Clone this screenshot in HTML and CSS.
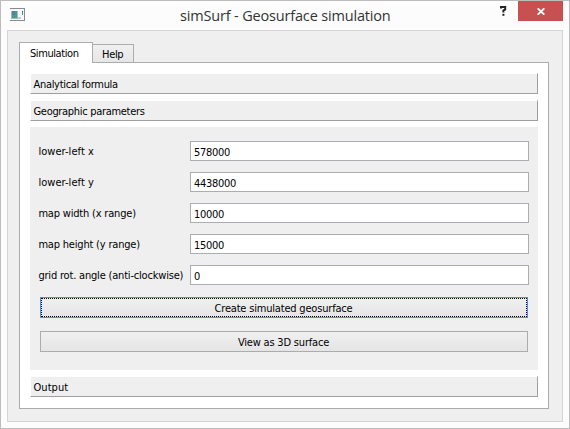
FILE: index.html
```html
<!DOCTYPE html>
<html lang="en">
<head>
<meta charset="utf-8">
<title>simSurf - Geosurface simulation</title>
<link rel="stylesheet" href="styles.css">
</head>
<body>
<div class="window">
  <header class="titlebar">
    <svg class="app-icon" width="16" height="14" viewBox="0 0 16 14">
      <rect x="0" y="0" width="15" height="13" fill="#858b8f"/>
      <rect x="0" y="1" width="14" height="11" fill="#f7f8f8"/>
      <rect x="1" y="3" width="7" height="8" fill="#a3b9ca"/>
      <rect x="2" y="3" width="5" height="7" fill="#4d9c80"/>
      <rect x="2" y="3" width="3" height="4" fill="#4f82a3"/>
      <rect x="8" y="9" width="3" height="2" fill="#c8cbcc"/>
      <rect x="12" y="3" width="1" height="2" fill="#3465b5"/>
      <rect x="12" y="5" width="1" height="2" fill="#4aa56c"/>
    </svg>
    <h1 class="title">simSurf - Geosurface simulation</h1>
    <svg class="help" width="8" height="12" viewBox="0 0 8 12">
      <path d="M1 3.6V2H5.2V4.4L3.4 5.6V7.6" fill="none" stroke="#222" stroke-width="2"/>
      <rect x="2.4" y="8.8" width="2" height="2" fill="#222"/>
    </svg>
    <div class="close">
      <svg width="8" height="7" viewBox="0 0 8 7"><path d="M.7 .3L7.3 6.7M7.3 .3L.7 6.7" stroke="#fff" stroke-width="1.8"/></svg>
    </div>
  </header>
  <main class="client">
    <nav class="tabs">
      <div class="tab active"><span class="tightest">Simulation</span></div>
      <div class="tab"><span class="tighter">Help</span></div>
    </nav>
    <section class="pane">
      <div class="section-head"><span class="tighter">Analytical formula</span></div>
      <div class="section-head"><span class="tighter">Geographic parameters</span></div>
      <div class="form">
        <div class="row"><label class="loose">lower-left x</label><div class="field"><span>578000</span></div></div>
        <div class="row"><label class="loose">lower-left y</label><div class="field"><span>4438000</span></div></div>
        <div class="row"><label>map width (x range)</label><div class="field"><span>10000</span></div></div>
        <div class="row"><label>map height (y range)</label><div class="field"><span>15000</span></div></div>
        <div class="row"><label>grid rot. angle (anti-clockwise)</label><div class="field"><span>0</span></div></div>
        <div class="button focused"><span>Create simulated geosurface</span></div>
        <div class="button"><span>View as 3D surface</span></div>
      </div>
      <div class="section-head"><span class="loose">Output</span></div>
    </section>
  </main>
</div>
</body>
</html>
```
FILE: styles.css
```css
* { box-sizing: border-box; }
body {
  margin: 0;
  font: 11px/15px "DejaVu Sans Condensed", "DejaVu Sans", sans-serif;
  font-stretch: condensed;
  color: #000;
}
span, label { white-space: nowrap; letter-spacing: -0.19px; }
.tighter { letter-spacing: -0.31px; }
.tightest { letter-spacing: -0.42px; }
.loose { letter-spacing: 0.05px; }
.window {
  width: 570px;
  height: 429px;
  border: 1px solid #bcbcbc;
  background: #fcfcfc;
  padding: 0 6px 6px;
}
.titlebar { display: flex; height: 29px; align-items: flex-start; }
.app-icon { margin: 7px 0 0 3px; flex: none; }
.title {
  flex: 1;
  margin: 4px 0 0;
  padding-left: 154px;
  font: 14.5px/22px "Open Sans", sans-serif;
  letter-spacing: -0.17px;
  white-space: nowrap;
  color: #333;
}
.help { margin: 4px 10px 0 0; flex: none; }
.close {
  width: 45px;
  height: 20px;
  flex: none;
  background: #c75050;
  display: flex;
  align-items: center;
  justify-content: center;
  padding: 1px 0 0 1px;
}
.client {
  height: 392px;
  border: 1px solid #d4d4d4;
  background: #efefef;
  padding: 11px 13px 12px 11px;
}
.tabs { display: flex; align-items: flex-end; height: 20px; }
.tab {
  width: 41px;
  height: 18px;
  border: 1px solid #acacac;
  border-width: 1px 1px 0 0;
  background: linear-gradient(#f0f0f0, #e6e6e6);
  padding: 2px 0 0 9px;
}
.tab.active {
  position: relative;
  width: 74px;
  height: 21px;
  margin-bottom: -1px;
  border-left-width: 1px;
  background: #fff;
  padding: 3px 0 0 10px;
}
.pane {
  height: 347px;
  border: 1px solid #acacac;
  background: #fff;
  padding: 10px;
  display: flex;
  flex-direction: column;
  gap: 6px;
}
.section-head {
  height: 21px;
  border: 1px solid #fff;
  border-right-color: #a0a0a0;
  border-bottom-color: #a0a0a0;
  background: #efefef;
  padding: 3px 0 0 2.5px;
}
.form { height: 243px; background: #efefef; padding: 14px 9px 0 8px; }
.row { display: flex; height: 20px; margin-bottom: 11px; }
.row label { width: 152px; padding: 3px 0 0 0.4px; }
.field {
  width: 339px;
  border: 1px solid #abadb3;
  background: #fff;
  padding: 3px 0 0 3px;
}
.field span { letter-spacing: -0.3px; }
.button {
  width: 488px;
  height: 21px;
  margin: 0 0 13px 2px;
  border: 1px solid #acacac;
  background: linear-gradient(#f0f0f0, #e5e5e5);
  text-align: center;
  padding: 3px 1px 0 0;
}
.row + .button { margin-top: 12px; }
.button.focused { border-color: #3399ff; outline: 1px dotted #000; outline-offset: -2px; }
```
